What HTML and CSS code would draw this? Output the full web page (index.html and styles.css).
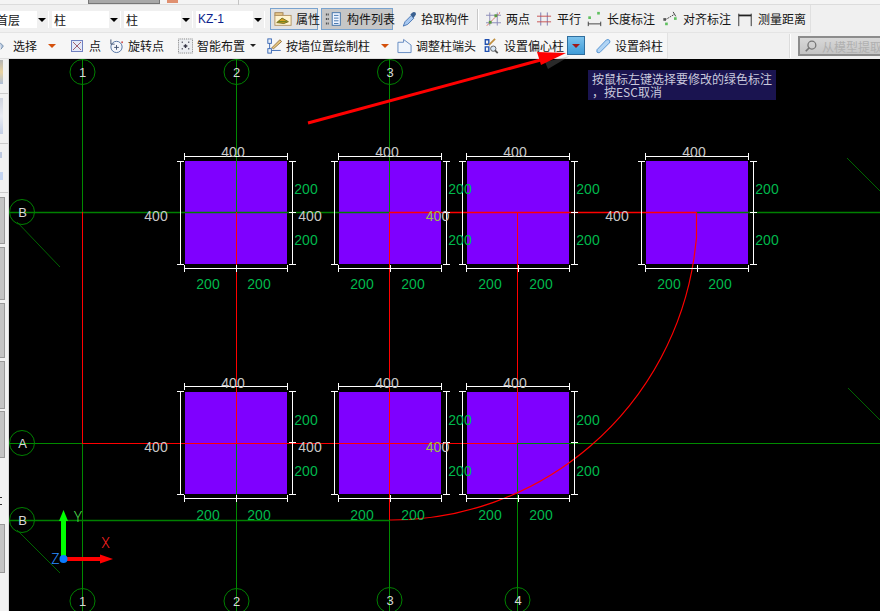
FILE: index.html
```html
<!DOCTYPE html>
<html lang="zh">
<head>
<meta charset="utf-8">
<title>柱 绘图</title>
<link rel="stylesheet" href="styles.css">
</head>
<body>
<div class="app">
  <div class="topstrip">
    <span class="tab"></span>
    <span class="tabmark"></span>
    <span class="topsep"></span>
  </div>

  <div class="row row-one">
    <div class="combo combo-a"><span class="combo-text clip-left">首层</span><span class="combo-arrow"></span></div>
    <div class="combo combo-b"><span class="combo-text">柱</span><span class="combo-arrow"></span></div>
    <div class="combo combo-b"><span class="combo-text">柱</span><span class="combo-arrow"></span></div>
    <div class="combo combo-c"><span class="combo-text kz">KZ-1</span><span class="combo-arrow"></span></div>

    <div class="tool toggle toggle-a">
      <svg class="ico ico-w" viewBox="0 0 20 16"><rect x="1" y="1" width="9" height="3" fill="#e8c98a" stroke="#a08050"/><rect x="1" y="4" width="18" height="11" fill="#fff4d0" stroke="#b09060"/><path d="M3 12 L9 7 L16 11 L11 13Z" fill="#d8a020" stroke="#6a6a20"/><path d="M5 11 L14 11" stroke="#4a7a20"/></svg>
      <span>属性</span>
    </div>
    <div class="tool toggle toggle-b">
      <svg class="ico ico-w" viewBox="0 0 20 16"><path d="M1 3h3M1 8h3M1 13h3" stroke="#333" stroke-width="2" stroke-dasharray="1 1"/><rect x="8" y="1" width="9" height="14" fill="#eef4ff" stroke="#3a6ea8"/><path d="M10 4h5M10 7h5M10 10h5M10 13h5" stroke="#3a6ea8"/></svg>
      <span>构件列表</span>
    </div>
    <div class="tool tool-pick">
      <svg class="ico" viewBox="0 0 16 18"><path d="M1 17 L3 12 L10 5 L13 8 L6 15Z" fill="#a8c8f0" stroke="#4070b0"/><path d="M9 4 L11 2 Q13 0 15 2 Q16 4 14 6 L12 8Z" fill="#3a6090"/></svg>
      <span>拾取构件</span>
    </div>
    <span class="sep sep-one"></span>
    <div class="tool tool-pt">
      <svg class="ico" viewBox="0 0 16 16"><path d="M4 1v14M12 1v14M0 4h16M0 12h16" stroke="#8a8ab8"/><path d="M1 15 L15 1" stroke="#d04030" stroke-dasharray="2 1"/><rect x="9" y="3" width="3" height="3" fill="#5a9a40"/><rect x="3" y="10" width="3" height="3" fill="#5a9a40"/></svg>
      <span>两点</span>
    </div>
    <div class="tool tool-par">
      <svg class="ico" viewBox="0 0 16 16"><path d="M4 1v14M11 1v14" stroke="#7a7ab0"/><path d="M0 5h15M0 11h15" stroke="#c85050"/></svg>
      <span>平行</span>
    </div>
    <div class="tool tool-len">
      <svg class="ico" viewBox="0 0 16 18"><rect x="11" y="1" width="3" height="3" fill="#60c060"/><rect x="1" y="6" width="3" height="3" fill="#60c060"/><path d="M1 12v5M15 12v5M1 14.500h14" stroke="#333"/></svg>
      <span>长度标注</span>
    </div>
    <div class="tool tool-ali">
      <svg class="ico ico-w" viewBox="0 0 17 18"><path d="M3 10 L13 4" stroke="#333" stroke-dasharray="2 1"/><path d="M12 1l3 5" stroke="#333"/><rect x="13" y="7" width="3" height="3" fill="#60c060"/><rect x="3" y="13" width="3" height="3" fill="#60c060"/><rect x="1" y="8" width="3" height="3" fill="#555"/></svg>
      <span>对齐标注</span>
    </div>
    <div class="tool tool-mea">
      <svg class="ico ico-w" viewBox="0 0 16 18"><path d="M1 3v14M15 3v14" stroke="#222"/><path d="M1 5h14" stroke="#222" stroke-width="2"/></svg>
      <span>测量距离</span>
    </div>
  </div>

  <div class="row row-two">
    <div class="tools-two">
      <div class="tool tool-sel">
        <svg class="ico-cut" viewBox="0 0 6 16"><path d="M0 4 L4 8 L1 12" fill="#b8c8e0" stroke="#6080a0"/></svg>
        <span>选择</span>
      </div>
      <span class="drop drop-sel"></span>
      <div class="tool tool-dot">
        <svg class="ico ico-sm" viewBox="0 0 12 12"><rect x="0.500" y="0.500" width="11" height="11" fill="#e4e8f8" stroke="#7080c0"/><path d="M2 2l8 8M10 2l-8 8" stroke="#a06070"/></svg>
        <span class="gap-wide">点</span>
      </div>
      <div class="tool tool-rot">
        <svg class="ico" viewBox="0 0 16 16"><circle cx="8" cy="9" r="6" fill="#f4f6fb" stroke="#5070a0"/><path d="M8 7v5M5.500 9.500h5" stroke="#405070"/><path d="M2 1v5h4" fill="none" stroke="#405070"/><circle cx="14" cy="4" r="1" fill="#d05050"/></svg>
        <span>旋转点</span>
      </div>
      <div class="tool tool-sma">
        <svg class="ico" viewBox="0 0 16 16"><rect x="0.500" y="0.500" width="15" height="15" fill="#eceef2" stroke="#777" stroke-dasharray="1 1"/><path d="M4 4h1M11 4h1M4 11h1M11 11h1M8 6v4M6 8h4" stroke="#334" stroke-width="1.500"/></svg>
        <span>智能布置</span>
        <span class="mini-arrow"></span>
      </div>
      <div class="tool tool-wal">
        <svg class="ico" viewBox="0 0 16 18"><rect x="0.500" y="1" width="4" height="5" fill="#e8f0fa" stroke="#3060b0"/><rect x="0.500" y="12" width="4" height="5" fill="#e8f0fa" stroke="#3060b0"/><path d="M2.500 6v6M5 14h10" stroke="#3060b0"/><path d="M5 11 L14 2 L16 4 L7 12Z" fill="#e8c880" stroke="#907040"/></svg>
        <span>按墙位置绘制柱</span>
      </div>
      <span class="drop drop-wal"></span>
      <div class="tool tool-adj">
        <svg class="ico" viewBox="0 0 16 16"><path d="M1 4 H7 V1 L15 7 V15 H1Z" fill="#f0f5fc" stroke="#6088c0"/></svg>
        <span>调整柱端头</span>
      </div>
      <div class="tool tool-ecc">
        <svg class="ico" viewBox="0 0 16 18"><path d="M1 2h4v5H1zM1 10h4v5H1z" fill="none" stroke="#2050b0" stroke-width="1.500"/><path d="M5 8 L12 1" stroke="#c09040" stroke-width="2"/><circle cx="10" cy="12" r="3" fill="#d8e8f8" stroke="#555"/><path d="M12 14l3 3" stroke="#555" stroke-width="2"/></svg>
        <span>设置偏心柱</span>
      </div>
      <div class="dropbtn"><span class="dropbtn-tri"></span></div>
      <div class="tool tool-sla">
        <svg class="ico" viewBox="0 0 16 16"><path d="M1 12 L11 1.500 Q13 0.500 14.500 2 Q15.500 4 14 5 L4 15 Q2 15.500 1 14.500Z" fill="#b0d4f4" stroke="#5090d0"/></svg>
        <span>设置斜柱</span>
      </div>
    </div>
    <span class="sep sep-two"></span>
    <div class="extract">
      <svg class="ico-extract" viewBox="0 0 16 16"><circle cx="9" cy="7" r="4.500" fill="none" stroke="#777" stroke-width="1.500"/><path d="M6 10l-4 4" stroke="#777" stroke-width="2"/></svg>
      <span>从模型提取</span>
    </div>
  </div>

  <div class="main">
    <aside class="side">
      <span class="side-ico side-a"></span>
      <span class="side-rule side-r1"></span>
      <span class="side-ico side-b"></span>
      <span class="side-rule side-r1"></span>
      <span class="side-ico side-c"></span>
      <span class="side-ico side-d"></span>
      <span class="side-rule side-r2"></span>
      <span class="side-btn side-h1"></span>
      <span class="side-btn side-h2"></span>
      <span class="side-btn side-h3"></span>
      <span class="side-btn side-h4"></span>
      <span class="side-btn side-h5"></span>
      <span class="side-mark side-m1"></span>
      <span class="side-mark side-m2"></span>
      <span class="side-btn side-h6"></span>
    </aside>
    <div class="canvas">
      <svg class="cad" viewBox="9 59 871 552">
        <defs>
          <g id="dims">
            <path d="M184 156.500h104M184.500 153v7M287.500 153v7M180.500 161v103M177 161.500h7M177 264.500h7M292.500 161v103M289 161.500h7M289 264.500h7M289 212.500h7M184 268.500h104M184.500 265v7M287.500 265v7M236.500 265v7"/>
          </g>
        </defs>

        <g class="fills">
          <rect x="185" y="161" width="102" height="103"/>
          <rect x="339" y="161" width="102" height="103"/>
          <rect x="467" y="161" width="102" height="103"/>
          <rect x="646" y="161" width="102" height="103"/>
          <rect x="185" y="392" width="102" height="102"/>
          <rect x="339" y="392" width="102" height="102"/>
          <rect x="467" y="392" width="102" height="102"/>
        </g>

        <g class="grid-g">
          <path d="M82.500 59V212M236.500 59V212M389.500 59V212"/>
          <path d="M82.500 443V611M236.500 443V611M517.500 443V611M389.500 520V611"/>
          <path d="M9 443.500H82M517 443.500H880"/>
          <path class="thin" d="M17 222L60 267M17 530L60 573M847 158L880 191M848 388L880 420"/>
        </g>
        <path class="grid-gb" d="M9 212.500H389M696 212.500H880M9 520.500H389"/>
        <g class="grid-r">
          <path d="M82.500 212V443M236.500 212V443M389.500 212V520M517.500 212V443"/>
          <path d="M82 443.500H517"/>
        </g>
        <path class="grid-rb" d="M389 212.500H696"/>
        <path class="arc" d="M696.500 212V238L694 258A306 308 0 0 1 390 520"/>

        <g class="dims">
          <use href="#dims"/>
          <use href="#dims" x="154"/>
          <use href="#dims" x="282"/>
          <use href="#dims" x="461"/>
          <use href="#dims" y="230"/>
          <use href="#dims" x="154" y="230"/>
          <use href="#dims" x="282" y="230"/>
        </g>

        <g class="bubbles">
          <circle cx="82.500" cy="72" r="12.500"/>
          <circle cx="236.500" cy="72" r="12.500"/>
          <circle cx="390" cy="72" r="12.500"/>
          <circle cx="82.500" cy="601" r="12.500"/>
          <circle cx="236.500" cy="601" r="12.500"/>
          <circle cx="389.500" cy="600" r="12.500"/>
          <circle cx="517.500" cy="600" r="12.500"/>
          <circle cx="22" cy="212" r="12.500"/>
          <circle cx="22" cy="443" r="12.500"/>
          <circle cx="22" cy="520" r="12.500"/>
        </g>
        <g class="axis">
          <text x="82.500" y="77">1</text>
          <text x="236.500" y="77">2</text>
          <text x="390" y="77">3</text>
          <text x="82.500" y="606">1</text>
          <text x="236.500" y="606">2</text>
          <text x="390" y="605">3</text>
          <text x="518" y="605">4</text>
          <text x="22.500" y="217">B</text>
          <text x="22.500" y="448">A</text>
          <text x="22.500" y="525">B</text>
        </g>

        <g class="lbl-w">
          <text x="233" y="157">400</text><text x="387" y="157">400</text><text x="515" y="157">400</text><text x="694" y="157">400</text>
          <text x="233" y="388">400</text><text x="387" y="388">400</text><text x="515" y="388">400</text>
          <text x="156" y="221">400</text><text x="310" y="221">400</text><text x="617" y="221">400</text>
          <text x="156" y="452">400</text><text x="310" y="452">400</text>
        </g>
        <g class="lbl-o">
          <text x="437.500" y="221">40<tspan class="lbl-tail">0</tspan></text>
          <text x="437.500" y="452">40<tspan class="lbl-tail">0</tspan></text>
        </g>
        <g class="lbl-g">
          <text x="306" y="194">200</text><text x="306" y="245">200</text>
          <text x="460" y="194">200</text><text x="460" y="245">200</text>
          <text x="588" y="194">200</text><text x="588" y="245">200</text>
          <text x="767" y="194">200</text><text x="767" y="245">200</text>
          <text x="306" y="425">200</text><text x="306" y="476">200</text>
          <text x="460" y="425">200</text><text x="460" y="476">200</text>
          <text x="588" y="425">200</text><text x="588" y="476">200</text>
          <text x="208" y="289">200</text><text x="259" y="289">200</text>
          <text x="362" y="289">200</text><text x="413" y="289">200</text>
          <text x="490" y="289">200</text><text x="541" y="289">200</text>
          <text x="669" y="289">200</text><text x="720" y="289">200</text>
          <text x="208" y="520">200</text><text x="259" y="520">200</text>
          <text x="362" y="520">200</text><text x="413" y="520">200</text>
          <text x="490" y="520">200</text><text x="541" y="520">200</text>
        </g>

        <path class="ucs-ys" d="M63.500 559V518"/>
        <path class="ucs-yh" d="M59 521L63.500 510L68 521Z"/>
        <path class="ucs-xs" d="M63 559H102"/>
        <path class="ucs-xh" d="M100 554.500L113 559L100 563.500Z"/>
        <circle class="ucs-o" cx="63.500" cy="559" r="4"/>
        <text class="ucs-ly" x="78" y="522">Y</text>
        <text class="ucs-lx" x="105.500" y="548">X</text>
        <text class="ucs-lz" x="55.500" y="564">Z</text>
      </svg>
      <div class="hint">按鼠标左键选择要修改的绿色标注<br>，按ESC取消</div>
    </div>
  </div>

  <svg class="pointer" viewBox="0 0 880 130">
    <path class="pointer-shadow" d="M545 62L570 56L548 69Z"/>
    <path class="pointer-line" d="M308 123L548 58"/>
    <path class="pointer-head" d="M566 53L537 52L541 65Z"/>
  </svg>
</div>
</body>
</html>
```

FILE: styles.css
```css
* { box-sizing: border-box; }
html, body { margin: 0; padding: 0; height: 100%; background: #f0f0f0; overflow: hidden; }
body { font-family: "Noto Sans CJK SC", "Liberation Sans", sans-serif; font-size: 12px; color: #141414; }

.app { position: relative; width: 880px; height: 611px; display: flex; flex-direction: column; }

.topstrip { height: 5px; display: flex; background: #f4f4f4; border-bottom: 1px solid #dcdcdc; flex: none; }
.tab { width: 72px; height: 4px; margin-left: 88px; background: #a8a8a8; border: 1px solid #777; border-top: 0; }
.tabmark { width: 11px; height: 3px; margin-left: 7px; background: #e09070; }
.topsep { width: 1px; height: 5px; margin-left: 60px; background: #c4c4c4; }

.row { display: flex; align-items: center; flex: none; }
.row-one { height: 28px; padding-top: 1px; background: #f0f0f0; border-bottom: 1px solid #e4e4e4; width: 811px; border-right: 1px solid #e0e0e0; }
.row-two { height: 26px; }

.combo { display: flex; align-items: center; justify-content: space-between; height: 17px; background: #fff; margin-right: 3px; }
.combo-a { width: 49px; }
.combo-b { width: 69px; padding-left: 2px; }
.combo-c { width: 69px; padding-left: 2px; }
.combo-text { line-height: 17px; white-space: nowrap; }
.clip-left { margin-left: -4px; }
.kz { font-family: "Liberation Sans", sans-serif; color: #0c1f8c; font-size: 12px; }
.combo-arrow { width: 11px; height: 17px; background: #f0f0f0; position: relative; margin-right: 1px; }
.combo-arrow::after { content: ""; position: absolute; left: 1px; top: 7px; border: 4px solid transparent; border-top: 4px solid #000; border-bottom: 0; }

.tool { display: flex; align-items: center; gap: 4px; white-space: nowrap; line-height: 18px; flex: none; }
.ico { width: 15px; height: 16px; flex: none; }
.ico-w { width: 18px; }
.ico-sm { width: 12px; height: 12px; }
.ico-cut { width: 5px; height: 16px; flex: none; }

.toggle { height: 22px; border: 1px solid #79a3cf; padding: 0 1px 0 3px; justify-content: space-between; }
.toggle-a { width: 48px; margin-left: 2px; background: #e2e2e2; }
.toggle-b { width: 72px; margin-left: 3px; background: #c6c6c6; }
.tool-pick { margin-left: 9px; }
.sep { width: 2px; flex: none; border-left: 1px solid #c8c8c8; border-right: 1px solid #fff; }
.sep-one { height: 21px; margin-left: 8px; }
.tool-pt { margin-left: 7px; }
.tool-par { margin-left: 7px; }
.tool-len { margin-left: 6px; }
.tool-ali { margin-left: 6px; }
.tool-mea { margin-left: 5px; }
.tool-pt .ico, .tool-par .ico, .tool-len .ico { margin-right: 1px; }

.tools-two { display: flex; align-items: center; width: 668px; height: 26px; background: #f6f6f6; border-right: 1px solid #e2e2e2; border-bottom: 1px solid #dedede; flex: none; }
.tool-sel { gap: 8px; }
.drop { width: 0; height: 0; flex: none; border: 4px solid transparent; border-top: 4px solid #d4500c; border-bottom: 0; }
.drop-sel { margin-left: 11px; }
.tool-dot { margin-left: 15px; }
.gap-wide { margin-left: 2px; }
.tool-rot { margin-left: 8px; }
.tool-sma { margin-left: 14px; }
.mini-arrow { width: 0; height: 0; border: 3px solid transparent; border-top: 3px solid #222; border-bottom: 0; margin-left: 1px; }
.tool-wal { margin-left: 11px; }
.drop-wal { margin-left: 11px; }
.tool-adj { margin-left: 8px; }
.tool-ecc { margin-left: 8px; gap: 5px; }
.dropbtn { width: 18px; height: 19px; margin-left: 3px; background: linear-gradient(#7cc2ec, #3f9cd8); border: 1px solid #2f6e9e; display: flex; align-items: center; justify-content: center; flex: none; }
.dropbtn-tri { width: 0; height: 0; border: 4px solid transparent; border-top: 4px solid #a01818; border-bottom: 0; }
.tool-sla { margin-left: 11px; }

.sep-two { height: 24px; margin-left: 121px; border-left: 1px solid #dcdcdc; }
.extract { display: flex; align-items: center; gap: 4px; width: 82px; height: 20px; margin-left: 7px; background: linear-gradient(#d8d8d8, #c4c4c4); border: 2px solid #8c8c8c; border-right: 0; color: #b0b0b0; white-space: nowrap; overflow: hidden; flex: none; padding-left: 4px; }
.ico-extract { width: 14px; height: 14px; flex: none; }

.main { display: flex; flex: 1; min-height: 0; }
.side { width: 9px; flex: none; background: #f2f2f2; display: flex; flex-direction: column; align-items: flex-start; border-right: 1px solid #dadada; }
.side-ico { display: block; width: 3px; flex: none; opacity: 0.7; }
.side-a { height: 24px; margin-top: 1px; background: linear-gradient(#999, #e4c47c 50%, #90a8cc); }
.side-b { height: 36px; margin-top: 4px; background: linear-gradient(#c0c6d6, #e6e9f2 50%, #b0c0e0); }
.side-c { height: 6px; margin-top: 8px; width: 2px; background: #a8b8d8; }
.side-d { height: 8px; margin-top: 14px; background: #b0c8f0; }
.side-rule { display: block; height: 1px; width: 8px; background: #ccc; flex: none; }
.side-r1 { margin-top: 9px; }
.side-r2 { margin-top: 12px; }
.side-btn { display: block; width: 5px; flex: none; background: #c4c4c4; border: 1px solid #999; border-left: 0; margin-bottom: 3px; }
.side-h1 { height: 47px; margin-top: 4px; }
.side-h2 { height: 53px; }
.side-h3 { height: 55px; }
.side-h4 { height: 48px; margin-bottom: 2px; }
.side-h5 { height: 47px; }
.side-mark { display: block; width: 2px; height: 1px; background: #333; flex: none; }
.side-m1 { margin-top: 36px; }
.side-m2 { margin-top: 6px; }
.side-h6 { height: 49px; margin-top: 19px; }

.canvas { position: relative; flex: 1; min-width: 0; background: #000; overflow: hidden; }
.cad { display: block; width: 871px; height: 552px; }
.cad text { font-family: "Liberation Sans", sans-serif; text-anchor: middle; }

.fills rect { fill: #7f00ff; }
.grid-g path, .grid-gb, .grid-r path, .grid-rb, .arc, .dims, .bubbles circle { fill: none; }
.grid-g path { stroke: #008a00; stroke-width: 1; }
.grid-g .thin { stroke: #006400; }
.grid-gb { stroke: #008000; stroke-width: 1.500; }
.grid-r path { stroke: #f00; stroke-width: 1; }
.grid-rb { stroke: #f00; stroke-width: 1.500; }
.arc { stroke: #f00; stroke-width: 1.200; }
.dims { stroke: #fff; stroke-width: 1; }
.bubbles circle { stroke: #008000; stroke-width: 1; }
.axis text { font-size: 13px; fill: #d8d8d8; }
.lbl-w text { font-size: 14px; fill: #c8c8c8; }
.lbl-o text { font-size: 14px; fill: #9cc24a; }
.lbl-o .lbl-tail { fill: #c8c8c8; }
.lbl-g text { font-size: 14px; fill: #00b84c; }

.ucs-ys { fill: none; stroke: #00ff00; stroke-width: 5; }
.ucs-yh { fill: #00ff00; }
.ucs-xs { fill: none; stroke: #ff0000; stroke-width: 4; }
.ucs-xh { fill: #ff0000; }
.ucs-o { fill: #0a7cff; }
.cad .ucs-ly, .cad .ucs-lx, .cad .ucs-lz { font-family: "Roboto", "Liberation Sans", sans-serif; font-weight: 300; font-size: 14px; }
.cad .ucs-ly { fill: #4fe04f; }
.cad .ucs-lx { fill: #ff2020; }
.cad .ucs-lz { fill: #2a8cff; }

.hint { position: absolute; left: 579px; top: 11px; width: 188px; height: 30px; padding: 2px 0 0 4px; background: #1a1450; color: #c9c9dc; font-size: 12px; line-height: 13px; white-space: nowrap; }

.pointer { position: absolute; left: 0; top: 0; width: 880px; height: 130px; pointer-events: none; }
.pointer-line { stroke: #f00; stroke-width: 3; fill: none; }
.pointer-head { fill: #f00; }
.pointer-shadow { fill: #888; opacity: 0.3; }
```
